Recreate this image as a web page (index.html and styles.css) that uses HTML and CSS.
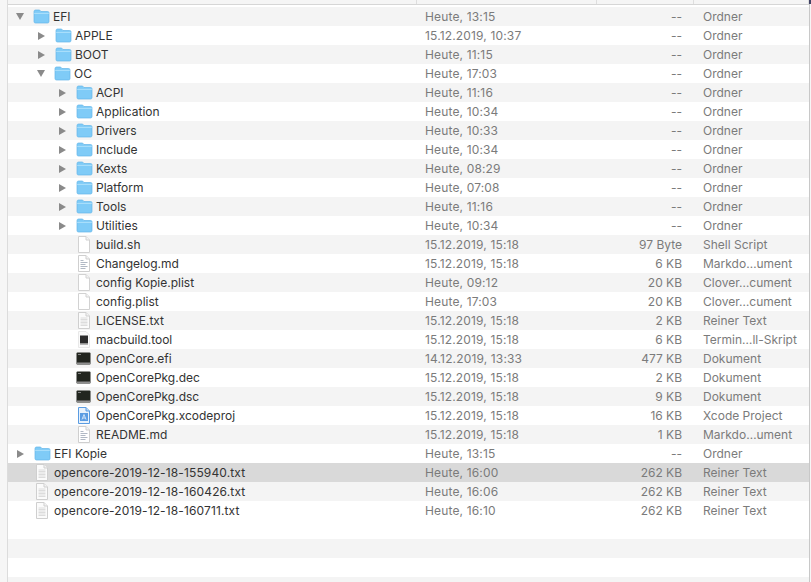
FILE: index.html
```html
<!DOCTYPE html>
<html>
<head>
    <meta charset="utf-8">
    <title>EFI</title>
    <link rel="stylesheet" href="styles.css">
</head>
<body>
    <svg class="sprites" width="0" height="0">
        <defs>
            <symbol id="folder" viewBox="0 0 17 15">
                <path d="M1 2.600C1 1.600 1.600 1 2.500 1H6c.7 0 1 .3 1.400.8l.6.7h6.600c.9 0 1.400.6 1.400 1.500v8.500c0 .9-.5 1.500-1.400 1.500H2.400C1.500 14 1 13.400 1 12.500z" fill="#7fcbf7" stroke="#66b6e8" stroke-width=".7"/>
                <path d="M1.200 4.400h14.600" stroke="#aee0fb" stroke-width="1"/>
            </symbol>
            <symbol id="blank" viewBox="0 0 14 17">
                <path d="M1.500 .5H9L12.500 4V16.500H1.500z" fill="#fff" stroke="#d2d2d2"/>
                <path d="M9 .5V4h3.500" fill="#f4f4f4" stroke="#d2d2d2"/>
            </symbol>
            <symbol id="md" viewBox="0 0 14 17">
                <path d="M1.500 .5H9L12.500 4V16.500H1.500z" fill="#fff" stroke="#cfcfcf"/>
                <path d="M9 .5V4h3.500" fill="#f4f4f4" stroke="#cfcfcf"/>
                <path d="M3.500 5.500h3M3.500 7.500h7M3.500 9.500h5M3.500 11.500h7M3.500 13.500h5" stroke="#b0b8c4"/>
            </symbol>
            <symbol id="txt" viewBox="0 0 14 17">
                <path d="M1.500 .5H9L12.500 4V16.500H1.500z" fill="#fbfbfb" stroke="#cfcfcf"/>
                <path d="M9 .5V4h3.500" fill="#f4f4f4" stroke="#cfcfcf"/>
                <path d="M3.500 6h7M3.500 7.500h7M3.500 9h7M3.500 10.500h7M3.500 12h7M3.500 13.500h7" stroke="#dcdcdc"/>
            </symbol>
            <symbol id="tool" viewBox="0 0 14 17">
                <path d="M1.500 .5H9L12.500 4V16.500H1.500z" fill="#fafafa" stroke="#e8e8e8"/>
                <rect x="3" y="4.500" width="8" height="8" fill="#2b2b2b"/>
                <path d="M3 13.500h8" stroke="#b5b5b5"/>
            </symbol>
            <symbol id="exec" viewBox="0 0 15 13">
                <rect x=".5" y=".5" width="14" height="12" rx="1" fill="#22251f"/>
                <path d="M.5 10.500h14v1c0 .6-.4 1-1 1h-12c-.6 0-1-.4-1-1z" fill="#8f8f8f"/>
                <path d="M2 2.500h3" stroke="#9a9a9a" stroke-width=".8"/>
            </symbol>
            <symbol id="xcode" viewBox="0 0 14 17">
                <path d="M1.500 .5H9L12.500 4V16.500H1.500z" fill="#e8f2fc" stroke="#5a9ce2"/>
                <path d="M9 .5V4h3.500" fill="#bcd9f6" stroke="#5a9ce2"/>
                <rect x="3" y="6" width="8" height="8" fill="#5a9ce2"/>
                <path d="M5 12.500 7 7.500l2 5M5.800 11h2.400" fill="none" stroke="#e8f2fc" stroke-width=".8"/>
            </symbol>
        </defs>
    </svg>

    <div class="finder">
        <div class="header">
            <span class="head-col col-name"></span>
            <span class="head-col col-date"></span>
            <span class="head-col col-size"></span>
            <span class="head-col col-kind"></span>
        </div>
        <div class="rows" id="rows"></div>
    </div>
    <div class="corner"></div>

    <script>
        // level, arrow (open / closed / none), icon, name, date, size, kind
        const files = [
            [0, "open", "folder", "EFI", "Heute, 13:15", "--", "Ordner"],
            [1, "closed", "folder", "APPLE", "15.12.2019, 10:37", "--", "Ordner"],
            [1, "closed", "folder", "BOOT", "Heute, 11:15", "--", "Ordner"],
            [1, "open", "folder", "OC", "Heute, 17:03", "--", "Ordner"],
            [2, "closed", "folder", "ACPI", "Heute, 11:16", "--", "Ordner"],
            [2, "closed", "folder", "Application", "Heute, 10:34", "--", "Ordner"],
            [2, "closed", "folder", "Drivers", "Heute, 10:33", "--", "Ordner"],
            [2, "closed", "folder", "Include", "Heute, 10:34", "--", "Ordner"],
            [2, "closed", "folder", "Kexts", "Heute, 08:29", "--", "Ordner"],
            [2, "closed", "folder", "Platform", "Heute, 07:08", "--", "Ordner"],
            [2, "closed", "folder", "Tools", "Heute, 11:16", "--", "Ordner"],
            [2, "closed", "folder", "Utilities", "Heute, 10:34", "--", "Ordner"],
            [2, "", "blank", "build.sh", "15.12.2019, 15:18", "97 Byte", "Shell Script"],
            [2, "", "md", "Changelog.md", "15.12.2019, 15:18", "6 KB", "Markdo\u2026ument"],
            [2, "", "blank", "config Kopie.plist", "Heute, 09:12", "20 KB", "Clover\u2026cument"],
            [2, "", "blank", "config.plist", "Heute, 17:03", "20 KB", "Clover\u2026cument"],
            [2, "", "txt", "LICENSE.txt", "15.12.2019, 15:18", "2 KB", "Reiner Text"],
            [2, "", "tool", "macbuild.tool", "15.12.2019, 15:18", "6 KB", "Termin\u2026ll-Skript"],
            [2, "", "exec", "OpenCore.efi", "14.12.2019, 13:33", "477 KB", "Dokument"],
            [2, "", "exec", "OpenCorePkg.dec", "15.12.2019, 15:18", "2 KB", "Dokument"],
            [2, "", "exec", "OpenCorePkg.dsc", "15.12.2019, 15:18", "9 KB", "Dokument"],
            [2, "", "xcode", "OpenCorePkg.xcodeproj", "15.12.2019, 15:18", "16 KB", "Xcode Project"],
            [2, "", "md", "README.md", "15.12.2019, 15:18", "1 KB", "Markdo\u2026ument"],
            [0, "closed", "folder", "EFI Kopie", "Heute, 13:15", "--", "Ordner"],
            [0, "", "txt", "opencore-2019-12-18-155940.txt", "Heute, 16:00", "262 KB", "Reiner Text"],
            [0, "", "txt", "opencore-2019-12-18-160426.txt", "Heute, 16:06", "262 KB", "Reiner Text"],
            [0, "", "txt", "opencore-2019-12-18-160711.txt", "Heute, 16:10", "262 KB", "Reiner Text"]
        ];

        const rows = document.getElementById("rows");

        files.forEach(function(f, i) {
            const row = document.createElement("div");
            let cls = "row";
            if (i === 24) {
                cls += " selected";
            } else if ((i < 24 && i % 2 === 0) || i === 25) {
                cls += " stripe";
            }
            row.className = cls;
            const wide = f[2] === "exec" ? " icon-wide" : "";
            const icon = f[2] === "folder" ? "icon-folder" : "icon-file" + wide;
            const nameClass = i >= 24 ? "name name-log" : "name";
            row.innerHTML =
                `<div class="col-name cell-name level-${f[0]}">` +
                `<span class="arrow ${f[1]}"></span>` +
                `<svg class="${icon}"><use href="#${f[2]}"></use></svg>` +
                `<span class="${nameClass}">${f[3]}</span></div>` +
                `<div class="col-date cell">${f[4]}</div>` +
                `<div class="col-size cell">${f[5]}</div>` +
                `<div class="col-kind cell">${f[6]}</div>`;
            rows.appendChild(row);
        });

        // empty rows below the list
        ["", " stripe", "", " stripe"].forEach(function(c) {
            const row = document.createElement("div");
            row.className = "row" + c;
            rows.appendChild(row);
        });
    </script>
</body>
</html>
```

FILE: styles.css
```css
html, body {
    margin: 0;
    height: 100%;
    overflow: hidden;
}
body {
    background: #f6f6f6;
    font-family: "Inter", "Liberation Sans", sans-serif;
    font-size: 12px;
    color: #333;
}
.sprites {
    display: block;
}
.finder {
    margin-left: 7px;
    margin-right: 1px;
    height: 582px;
    overflow: hidden;
    background: #fff;
    border-left: 1px solid #dcdcdc;
    border-right: 1px solid #c8c8c8;
}
.corner {
    position: absolute;
    top: 0;
    right: 0;
    width: 2px;
    height: 4px;
    background: #3f4163;
}
.header {
    display: flex;
    height: 4px;
    background: #f5f5f5;
    border-bottom: 1px solid #d6d6d6;
}
.head-col {
    border-right: 1px solid #dedede;
}
.rows {
    padding-top: 2px;
}
.row {
    display: flex;
    height: 19px;
    line-height: 19px;
    white-space: nowrap;
}
.stripe {
    background: #f4f4f4;
}
.selected {
    background: #d9d9d9;
}
.col-name {
    width: 409px;
    flex: none;
    box-sizing: border-box;
}
.col-date {
    width: 180px;
    flex: none;
    box-sizing: border-box;
}
.col-size {
    width: 97px;
    flex: none;
    box-sizing: border-box;
}
.col-kind {
    flex: 1;
}
.cell {
    color: #7b7b7b;
}
.col-date.cell {
    padding-left: 8px;
    letter-spacing: .15px;
}
.col-size.cell {
    text-align: right;
    padding-right: 12px;
}
.col-kind.cell {
    padding-left: 9px;
}
.cell-name {
    display: flex;
    align-items: center;
}
.level-0 {
    padding-left: 8px;
}
.level-1 {
    padding-left: 29px;
}
.level-2 {
    padding-left: 50px;
}
.name-log {
    letter-spacing: .13px;
}
.arrow {
    width: 9px;
    height: 9px;
    flex: none;
    margin-right: 8px;
}
.arrow.closed {
    width: 0;
    height: 0;
    margin-right: 10px;
    margin-left: 1px;
    border-left: 7px solid #8a8a8a;
    border-top: 4px solid transparent;
    border-bottom: 4px solid transparent;
}
.arrow.open {
    width: 0;
    height: 0;
    margin-right: 9px;
    border-top: 7px solid #8a8a8a;
    border-left: 4.5px solid transparent;
    border-right: 4.5px solid transparent;
}
.icon-folder {
    width: 17px;
    height: 15px;
    flex: none;
    margin-right: 3px;
}
.icon-file {
    width: 14px;
    height: 17px;
    flex: none;
    margin-left: 2px;
    margin-right: 5px;
}
.icon-file.icon-wide {
    width: 15px;
    height: 13px;
    margin-left: 1px;
}
```
